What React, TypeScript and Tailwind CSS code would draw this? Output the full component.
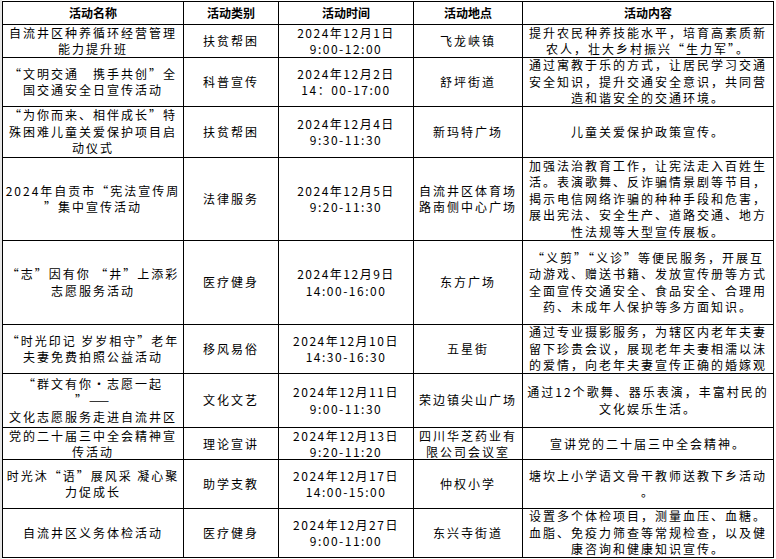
import React from "react";

/** --- Types --- */
type Activity = {
  name: string[];
  category: string;
  date: string[];
  place: string[];
  content: string[];
};

/** --- Data --- */
const activities: Activity[] = [
  {
    name: ["自流井区种养循环经营管理", "能力提升班"],
    category: "扶贫帮困",
    date: ["2024年12月1日", "9:00-12:00"],
    place: ["飞龙峡镇"],
    content: ["提升农民种养技能水平，培育高素质新", "农人，壮大乡村振兴“生力军”。"],
  },
  {
    name: ["“文明交通　携手共创”全", "国交通安全日宣传活动"],
    category: "科普宣传",
    date: ["2024年12月2日", "14：00-17:00"],
    place: ["舒坪街道"],
    content: [
      "通过寓教于乐的方式，让居民学习交通",
      "安全知识，提升交通安全意识，共同营",
      "造和谐安全的交通环境。",
    ],
  },
  {
    name: ["“为你而来、相伴成长”特", "殊困难儿童关爱保护项目启", "动仪式"],
    category: "扶贫帮困",
    date: ["2024年12月4日", "9:30-11:30"],
    place: ["新玛特广场"],
    content: ["儿童关爱保护政策宣传。"],
  },
  {
    name: ["2024年自贡市“宪法宣传周", "”集中宣传活动"],
    category: "法律服务",
    date: ["2024年12月5日", "9:20-11:30"],
    place: ["自流井区体育场", "路南侧中心广场"],
    content: [
      "加强法治教育工作，让宪法走入百姓生",
      "活。表演歌舞、反诈骗情景剧等节目，",
      "揭示电信网络诈骗的种种手段和危害，",
      "展出宪法、安全生产、道路交通、地方",
      "性法规等大型宣传展板。",
    ],
  },
  {
    name: ["“志”因有你 “井”上添彩", "志愿服务活动"],
    category: "医疗健身",
    date: ["2024年12月9日", "14:00-16:00"],
    place: ["东方广场"],
    content: [
      "“义剪”“义诊”等便民服务，开展互",
      "动游戏、赠送书籍、发放宣传册等方式",
      "全面宣传交通安全、食品安全、合理用",
      "药、未成年人保护等多方面知识。",
    ],
  },
  {
    name: ["“时光印记 岁岁相守”老年", "夫妻免费拍照公益活动"],
    category: "移风易俗",
    date: ["2024年12月10日", "14:30-16:30"],
    place: ["五星街"],
    content: [
      "通过专业摄影服务，为辖区内老年夫妻",
      "留下珍贵会议，展现老年夫妻相濡以沫",
      "的爱情，向老年夫妻宣传正确的婚嫁观",
    ],
  },
  {
    name: ["“群文有你·志愿一起", "”——", "文化志愿服务走进自流井区"],
    category: "文化文艺",
    date: ["2024年12月11日", "9:00-11:30"],
    place: ["荣边镇尖山广场"],
    content: ["通过12个歌舞、器乐表演，丰富村民的", "文化娱乐生活。"],
  },
  {
    name: ["党的二十届三中全会精神宣", "传活动"],
    category: "理论宣讲",
    date: ["2024年12月13日", "9:20-11:20"],
    place: ["四川华芝药业有", "限公司会议室"],
    content: ["宣讲党的二十届三中全会精神。"],
  },
  {
    name: ["时光沐“语”展风采 凝心聚", "力促成长"],
    category: "助学支教",
    date: ["2024年12月17日", "14:00-15:00"],
    place: ["仲权小学"],
    content: ["塘坎上小学语文骨干教师送教下乡活动", "。"],
  },
  {
    name: ["自流井区义务体检活动"],
    category: "医疗健身",
    date: ["2024年12月27日", "9:00-11:00"],
    place: ["东兴寺街道"],
    content: [
      "设置多个体检项目，测量血压、血糖。",
      "血脂、免疫力筛查等常规检查，以及健",
      "康咨询和健康知识宣传。",
    ],
  },
];

const headers = ["活动名称", "活动类别", "活动时间", "活动地点", "活动内容"];

/** --- Cell --- */
function Cell({
  lines,
  tight,
  narrow,
}: {
  lines: string[];
  tight?: boolean;
  narrow?: boolean;
}) {
  return (
    <div
      className={`bg-white flex flex-col items-center justify-center text-center text-[12px] text-black ${
        narrow ? "tracking-[1.5px]" : "tracking-[2px]"
      } ${tight ? "leading-[16px]" : "leading-[16.4px]"}`}
    >
      {lines.map((line, i) => (
        <span key={i} className="block whitespace-nowrap">
          {line}
        </span>
      ))}
    </div>
  );
}

/** --- Component --- */
export default function App() {
  return (
    <div
      className="w-[776px] h-[559px] bg-white flex overflow-hidden"
      style={{ fontFamily: '"Noto Sans CJK SC", "Noto Sans", sans-serif' }}
    >
      <div className="w-[2px] h-full bg-[#e6e6e6]" />
      <div className="pt-[1px]">
        <div className="grid grid-cols-[180px_94px_134px_108px_250px] grid-rows-[22px_32px_48px_50px_82px_83px_48px_53px_31px_48px_48px] gap-px p-px bg-black">
          {headers.map((h) => (
            <div
              key={h}
              className="bg-white flex items-center justify-center text-[12px] font-bold text-black"
            >
              {h}
            </div>
          ))}

          {activities.map((a, i) => {
            const tight = i === 7;
            return (
              <React.Fragment key={i}>
                <Cell lines={a.name} tight={tight} />
                <Cell lines={[a.category]} tight={tight} />
                <Cell lines={a.date} tight={tight} narrow />
                <Cell lines={a.place} tight={tight} />
                <Cell lines={a.content} tight={tight} />
              </React.Fragment>
            );
          })}
        </div>
      </div>
    </div>
  );
}
